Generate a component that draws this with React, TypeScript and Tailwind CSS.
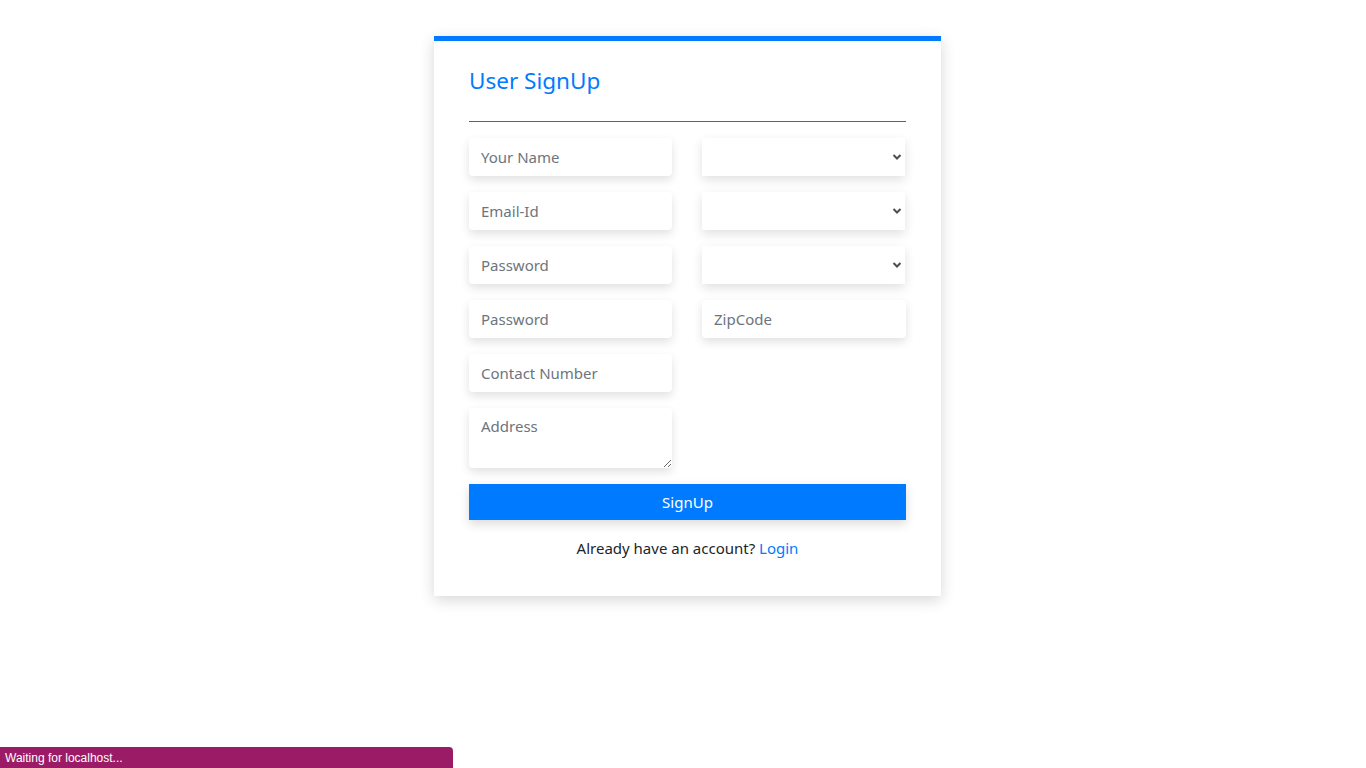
import React from 'react';

const inputCls =
  'w-full h-[38px] px-3 bg-white rounded-[4px] text-[15px] text-[#495057] placeholder:text-[#6c757d] outline-none shadow-[0_4px_10px_rgba(0,0,0,0.12)]';

const SelectBox: React.FC = () => (
  <div className="relative w-[203px] h-[38px] bg-white shadow-[0_4px_10px_rgba(0,0,0,0.12)]">
    <select className="w-full h-full appearance-none bg-transparent px-3 outline-none">
      <option value=""></option>
    </select>
    <svg
      className="absolute right-[3px] top-[15px] w-[10px] h-[8px] pointer-events-none"
      viewBox="0 0 10 8"
      fill="none"
      stroke="#4a4f57"
      strokeWidth="2"
    >
      <path d="M1.5 2l3.5 3.5L8.5 2" />
    </svg>
  </div>
);

const App: React.FC = () => {
  return (
    <div className="min-h-screen bg-white font-['Noto_Sans',sans-serif] pt-[36px]">
      <div className="flex justify-center pl-[9px]">
        <div className="w-[507px] bg-white border-t-[5px] border-[#007bff] shadow-[0_4px_14px_rgba(0,0,0,0.16)] px-[35px] pt-[25px] pb-[36px]">
          {/* Header */}
          <h2 className="text-[22.5px] leading-[30px] text-[#007bff]">User SignUp</h2>
          <div className="mt-[25px] h-px bg-[#2a6bbf]"></div>

          {/* Form */}
          <div className="mt-[16px] grid grid-cols-[203px_204px] gap-x-[30px]">
            <div className="flex flex-col gap-[16px]">
              <input className={inputCls} placeholder="Your Name" />
              <input className={inputCls} placeholder="Email-Id" />
              <input className={inputCls} type="password" placeholder="Password" />
              <input className={inputCls} type="password" placeholder="Password" />
              <input className={inputCls} placeholder="Contact Number" />
              <textarea
                className="w-full h-[60px] px-3 py-[6px] bg-white rounded-[4px] text-[15px] leading-[24px] text-[#495057] placeholder:text-[#6c757d] outline-none shadow-[0_4px_10px_rgba(0,0,0,0.12)]"
                placeholder="Address"
              ></textarea>
            </div>
            <div className="flex flex-col gap-[16px]">
              <SelectBox />
              <SelectBox />
              <SelectBox />
              <input className={inputCls} placeholder="ZipCode" />
            </div>
          </div>

          <button className="mt-[16px] w-full h-[36px] bg-[#007bff] text-white text-[15px] shadow-[0_4px_10px_rgba(0,0,0,0.15)]">
            SignUp
          </button>

          <p className="mt-[16px] text-center text-[15px] leading-[24px] text-[#212529]">
            Already have an account? <a className="text-[#007bff]">Login</a>
          </p>
        </div>
      </div>

      {/* Browser status bubble */}
      <div className="fixed left-0 bottom-0 w-[453px] h-[21px] bg-[#9b1b66] rounded-tr-[4px] pl-[5px] flex items-center text-white text-[12px] font-['Liberation_Sans',sans-serif]">
        Waiting for localhost...
      </div>
    </div>
  );
};

export default App;
